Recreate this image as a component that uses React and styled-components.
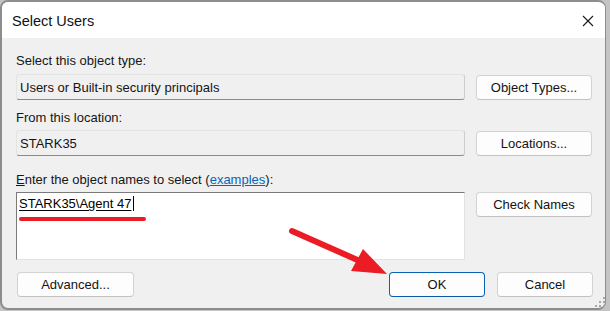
import React from "react";
import styled, { createGlobalStyle } from "styled-components";

const Global = createGlobalStyle`
  html, body { margin: 0; padding: 0; background: #c4c4c4; }
  body { font-family: "Liberation Sans", Arial, sans-serif; }
  * { box-sizing: border-box; }
`;

const Page = styled.div`
  position: relative;
  width: 610px;
  height: 311px;
  overflow: hidden;
  background: #c4c4c4;
`;

const Window = styled.div`
  width: 606px;
  height: 310px;
  border: 2px solid #8d8d8d;
  border-right-width: 1px;
  border-radius: 8px;
  overflow: hidden;
  display: flex;
  flex-direction: column;
  background: #f0f0f0;
`;

const TitleBar = styled.div`
  height: 36px;
  flex: none;
  background: #ffffff;
  display: flex;
  align-items: center;
  justify-content: space-between;
  padding: 0 11px 0 10px;
  font-size: 14.5px;
  color: #111;
`;

const Title = styled.span`
  margin-top: 1px;
`;

const CloseBtn = styled.span`
  display: flex;
  width: 12px;
  height: 12px;
  margin-top: 1px;
`;

const Body = styled.div`
  flex: 1;
  padding: 15px 12px 0 14px;
  display: flex;
  flex-direction: column;
`;

const Label = styled.div`
  font-size: 13px;
  line-height: 16px;
  height: 16px;
  color: #161616;
  margin-bottom: ${(p) => p.$gap}px;
`;

const Mnemonic = styled.span`
  text-decoration: underline;
`;

const Link = styled.span`
  color: #0a63b8;
  text-decoration: underline;
`;

const Row = styled.div`
  display: flex;
  align-items: ${(p) => (p.$top ? "flex-start" : "center")};
  gap: 11px;
  margin-bottom: ${(p) => p.$after}px;
`;

const Field = styled.div`
  width: 449px;
  height: 26px;
  border: 1px solid #e4e4e4;
  border-bottom-color: #8a8a8a;
  border-right-color: #cdcdcd;
  border-radius: 3px;
  background: #f0f0f0;
  font-size: 13px;
  line-height: 25px;
  padding-left: 3px;
  color: #141414;
`;

const NameBox = styled.div`
  position: relative;
  width: 449px;
  height: 68px;
  background: #ffffff;
  border: 1px solid #e2e2e2;
  border-top-color: #7a7a7a;
  border-left-color: #7a7a7a;
  font-size: 13px;
  line-height: 16px;
  padding: 3px 0 0 2px;
  color: #000;
`;

const Entered = styled.span`
  text-decoration: underline;
  text-underline-offset: 2px;
`;

const Caret = styled.span`
  display: inline-block;
  width: 1px;
  height: 15px;
  background: #000;
  vertical-align: -3px;
  margin-left: 1px;
`;

const Button = styled.button`
  width: ${(p) => p.$w}px;
  height: 25px;
  flex: none;
  background: #fdfdfd;
  border: 1px solid ${(p) => (p.$primary ? "#0a62b6" : "#d2d2d2")};
  border-bottom-color: ${(p) => (p.$primary ? "#0a5aa8" : "#c2c2c2")};
  border-radius: 4px;
  font-family: "Liberation Sans", Arial, sans-serif;
  font-size: 13px;
  color: #131313;
  padding: 0;
  margin: 0;
  cursor: default;
`;

const Footer = styled.div`
  display: flex;
  align-items: center;
  margin-top: 12px;
  padding-left: 1px;
`;

const Spacer = styled.div`
  flex: 1;
`;

const FooterRight = styled.div`
  display: flex;
  gap: 12px;
`;

const Overlay = styled.svg`
  position: absolute;
  left: 0;
  top: 0;
  pointer-events: none;
`;

export default function App() {
  return (
    <>
      <Global />
      <Page>
        <Window>
          <TitleBar>
            <Title>Select Users</Title>
            <CloseBtn>
              <svg width="12" height="12" viewBox="0 0 12 12">
                <path d="M1 1 L11 11 M11 1 L1 11" stroke="#1a1a1a" strokeWidth="1.1" />
              </svg>
            </CloseBtn>
          </TitleBar>
          <Body>
            <Label $gap={5}>Select this object type:</Label>
            <Row $after={10}>
              <Field>Users or Built-in security principals</Field>
              <Button $w={116}>Object Types...</Button>
            </Row>
            <Label $gap={4}>From this location:</Label>
            <Row $after={16}>
              <Field>STARK35</Field>
              <Button $w={116}>Locations...</Button>
            </Row>
            <Label $gap={4}>
              <Mnemonic>E</Mnemonic>nter the object names to select (<Link>examples</Link>):
            </Label>
            <Row $top $after={0}>
              <NameBox>
                <Entered>STARK35\Agent 47</Entered>
                <Caret />
              </NameBox>
              <Button $w={116}>Check Names</Button>
            </Row>
            <Footer>
              <Button $w={117}>Advanced...</Button>
              <Spacer />
              <FooterRight>
                <Button $w={96} $primary>OK</Button>
                <Button $w={96}>Cancel</Button>
              </FooterRight>
            </Footer>
          </Body>
        </Window>
        <Overlay width="610" height="311" viewBox="0 0 610 311">
          <line x1="21" y1="219" x2="144" y2="219" stroke="#ec1c24" strokeWidth="4" strokeLinecap="round" />
          <line x1="292" y1="231" x2="362" y2="262" stroke="#ec1c24" strokeWidth="6" strokeLinecap="round" />
          <polygon points="387,274 351,271 363,249" fill="#ec1c24" />
          <g fill="#a8a8a8">
            <rect x="603" y="297" width="2" height="2" />
            <rect x="599" y="301" width="2" height="2" />
            <rect x="603" y="301" width="2" height="2" />
            <rect x="595" y="305" width="2" height="2" />
            <rect x="599" y="305" width="2" height="2" />
            <rect x="603" y="305" width="2" height="2" />
          </g>
        </Overlay>
      </Page>
    </>
  );
}
